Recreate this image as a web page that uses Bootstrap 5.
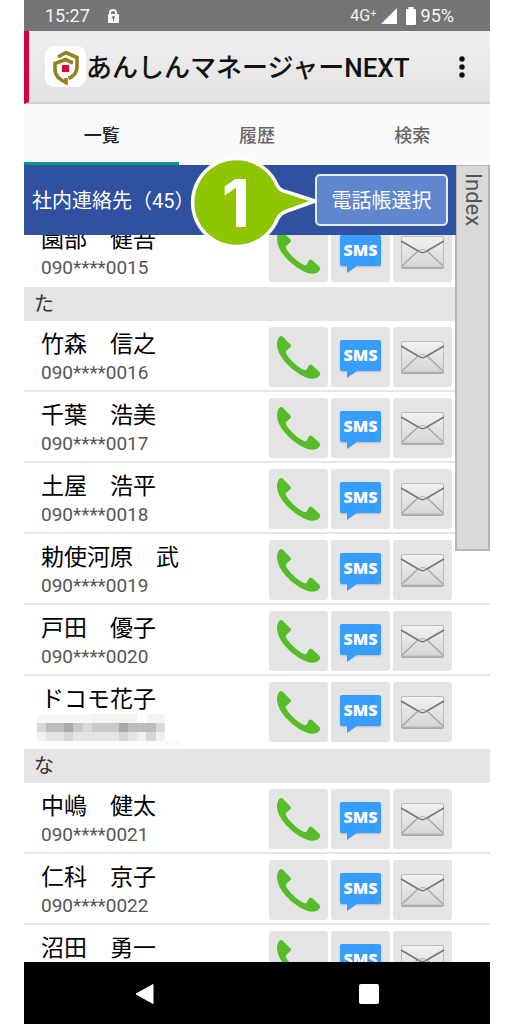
<!DOCTYPE html>
<html lang="ja">
<head>
<meta charset="utf-8">
<meta name="viewport" content="width=device-width, initial-scale=1">
<title>あんしんマネージャーNEXT</title>
<link href="https://cdn.jsdelivr.net/npm/bootstrap@5.3.0/dist/css/bootstrap.min.css" rel="stylesheet">
<style>
body{font-family:Roboto,"Noto Sans CJK JP",sans-serif;background:#fff;color:#111}
.phone{margin:0 24px}
.statusbar{background:#757575;color:#f4f4f4;height:31px;font-size:18px;line-height:31px;padding:0 36px 0 21px}
.net{font-size:16px}
.appbar{height:73px;background:linear-gradient(#f0f0f0,#e2e2e2);border-left:5px solid #d8003a;border-bottom:2px solid #d0d0d0;padding:0 16px}
.logo{width:41px;height:41px;background:#fff;border-radius:9px}
.title{font-size:26px;font-weight:500;line-height:36px;padding-top:3px}
.tabs{height:61px;background:#fafafa}
.tabs .nav-link{color:#666;font-size:18px;line-height:24px;font-weight:500;border-bottom:3px solid transparent;border-radius:0;padding:20px 0 14px}
.tabs .nav-link.active{color:#222;border-color:#009688}
.bookbar{height:70px;background:#3050a0;color:#fff;margin-right:34px;padding:0 8px;z-index:3}
.bookname{font-size:20px;line-height:28px;font-weight:400;margin:0;padding-top:2px}
.pick{width:133px;height:52px;background:#6086cf;border:2px solid #e4ecfa;border-radius:5px;color:#fff;font-size:20px;line-height:28px;padding:2px 0 0}
.pick:hover{background:#5078c4;color:#fff;border-color:#fff}
.callout{right:100%;top:50%;width:127px;height:92px;margin:-44px -2px 0 0;pointer-events:none}
.step{left:0;top:0;width:92px;text-align:center;font:700 66px/94px Inter,sans-serif;color:#fff}
.index-tab{top:0;right:0;width:35px;height:386px;background:#d9d9d9;border:2px solid #b6b6b6;border-top-width:1px;color:#555;writing-mode:vertical-rl;font-size:22px;line-height:28px;padding:7px 0 0;text-align:left;z-index:2}
.viewport-list{min-height:0}
.scrolled{margin-top:-19px}
.group{height:34px;background:#e5e5e5;color:#333;font-size:20px;line-height:35px;padding-left:10px;margin:0;font-weight:400}
.contact{height:71px;border-bottom:2px solid #e6e6e6;padding:5px 38px 0 17px}
.contact.last{height:73px;border-bottom:0}
.contact.first{border-bottom:0}
.who{font-size:23px;line-height:30px;font-weight:400;margin:0;padding-top:4px;color:#000}
.num{font-size:19px;line-height:26px;color:#555}
.acts{gap:3px}
.act{width:59px;height:60px;background:#e4e4e4;border:0;border-radius:3px;padding:0;margin-top:1px}
.act svg{display:block}
.bubble{display:block;width:41px;height:31px;margin:-4px auto 0;background:#379dff;border-radius:2px;color:#fff;font:800 16px/31px "Open Sans",sans-serif;position:relative;box-shadow:0 1px 2px #0003}
.bubble::after{content:"";position:absolute;left:7px;top:100%;border-top:7px solid #379dff;border-right:10px solid transparent}
.mosaic{display:block;margin:-2px 0 0 -4px}
.softkeys{height:62px;background:#000;padding:0 9px}
.softkeys button{background:none;border:0;padding:0;line-height:0}
</style>
</head>
<body>
<svg width="0" height="0" class="position-absolute" aria-hidden="true">
<defs>
<linearGradient id="paper" x1="0" y1="0" x2="0" y2="1"><stop offset="0" stop-color="#f1f1f1"/><stop offset="1" stop-color="#d6d6d6"/></linearGradient>
<symbol id="call" viewBox="0 0 59 60"><path d="M12 9Q14 9 15 11L21 17Q23 19 21 20.500L17 24Q16 25.500 18 28C22 34 29 40 34 42.500Q37 44 38 42L39.500 39Q41 36.500 43 38L50 44.500Q52.500 47 50 49C47 53 39 52 34 49C21 42 9 30 8 18C8 14 9 10 12 9Z" fill="#56bd28"/></symbol>
<symbol id="mail" viewBox="0 0 59 60"><rect x="8" y="15" width="43" height="32" rx="2" fill="#aaa"/><rect x="8.500" y="14.500" width="42" height="30.500" rx="1.500" fill="url(#paper)" stroke="#bbb"/><path d="M9 44L25 29M50 44L34 29" stroke="#a5a5a5" stroke-width="1.300"/><path d="M8 19L26 29.500Q29.500 32 33 29.500L51 19" fill="none" stroke="#777" stroke-width="1.500"/><path d="M25 29.500Q29.500 25.500 34 29.500" fill="none" stroke="#aaa"/></symbol>
</defs>
</svg>
<div class="phone d-flex flex-column vh-100 overflow-hidden">
<div class="statusbar d-flex align-items-center flex-shrink-0">
<span>15:27</span>
<svg class="ms-3" width="14" height="16" viewBox="0 0 14 16" aria-label="ロック"><path d="M4 8V5a3 3 0 0 1 6 0v3" fill="none" stroke="#f4f4f4" stroke-width="2"/><rect x="2" y="6" width="11" height="9" rx="1" fill="#f4f4f4"/><circle cx="7.500" cy="9.500" r="1.400" fill="#757575"/><path d="M7.500 10v3" stroke="#757575"/></svg>
<span class="net ms-auto me-1">4G⁺</span>
<svg width="16" height="16" viewBox="0 0 16 16" aria-hidden="true"><path d="M0 16L16 0V16Z" fill="#fff"/></svg>
<svg class="ms-2 me-1" width="12" height="18" viewBox="0 0 12 18" aria-hidden="true"><path d="M3.500 0h5v2H10a1 1 0 0 1 1 1v14a1 1 0 0 1-1 1H2a1 1 0 0 1-1-1V3a1 1 0 0 1 1-1h1.500Z" fill="#fff"/></svg>
<span>95%</span>
</div>
<header class="appbar d-flex align-items-center flex-shrink-0">
<svg class="logo" viewBox="0 0 41 41" aria-hidden="true"><g fill="none" stroke="#95801f" stroke-width="3.600"><path d="M13 11L21 6.500L32 11.500V21C32 26 29 30 23.500 32.500"/><path d="M28 17L20.500 13.500L10 17.500V24C10 30 14 33.500 21 36.500V32"/></g><rect x="17" y="19" width="7" height="7" fill="#e00032"/></svg>
<h1 class="title mb-0 text-nowrap">あんしんマネージャーNEXT</h1>
<button class="btn p-0 border-0 ms-auto lh-1" aria-label="メニュー"><svg width="24" height="24" viewBox="0 0 24 24"><g fill="#111"><circle cx="12" cy="4" r="2.700"/><circle cx="12" cy="12" r="2.700"/><circle cx="12" cy="20" r="2.700"/></g></svg></button>
</header>
<nav class="tabs nav nav-justified flex-shrink-0">
<a class="nav-link nav-item active" aria-current="page" href="#list">一覧</a>
<a class="nav-link nav-item" href="#history">履歴</a>
<a class="nav-link nav-item" href="#search">検索</a>
</nav>
<main id="list" class="position-relative flex-grow-1 d-flex flex-column viewport-list">
<div class="bookbar d-flex align-items-center justify-content-between position-relative flex-shrink-0">
<h2 class="bookname text-nowrap">社内連絡先（45）</h2>
<div class="position-relative">
<button class="btn pick">電話帳選択</button>
<div class="callout position-absolute"><svg width="127" height="92" viewBox="0 0 127 92"><path d="M87 29A44 44 0 1 0 87 64Q90 57 97 55L125 45L97 36Q90 35 87 29Z" fill="#8fc400" stroke="#fff" stroke-width="3.500" stroke-linejoin="round"/></svg><span class="step position-absolute">1</span></div>
</div>
</div>
<button class="index-tab position-absolute">Index</button>
<div class="flex-grow-1 overflow-hidden viewport-list">
<div class="scrolled">
<div class="contact first d-flex justify-content-between"><div><h3 class="who">園部　健吾</h3><div class="num">090****0015</div></div><div class="d-flex acts"><button class="act" aria-label="電話"><svg width="59" height="60"><use href="#call"/></svg></button><button class="act"><span class="bubble">SMS</span></button><button class="act" aria-label="メール"><svg width="59" height="60"><use href="#mail"/></svg></button></div></div>
<h3 class="group">た</h3>
<div class="contact d-flex justify-content-between"><div><h3 class="who">竹森　信之</h3><div class="num">090****0016</div></div><div class="d-flex acts"><button class="act" aria-label="電話"><svg width="59" height="60"><use href="#call"/></svg></button><button class="act"><span class="bubble">SMS</span></button><button class="act" aria-label="メール"><svg width="59" height="60"><use href="#mail"/></svg></button></div></div>
<div class="contact d-flex justify-content-between"><div><h3 class="who">千葉　浩美</h3><div class="num">090****0017</div></div><div class="d-flex acts"><button class="act" aria-label="電話"><svg width="59" height="60"><use href="#call"/></svg></button><button class="act"><span class="bubble">SMS</span></button><button class="act" aria-label="メール"><svg width="59" height="60"><use href="#mail"/></svg></button></div></div>
<div class="contact d-flex justify-content-between"><div><h3 class="who">土屋　浩平</h3><div class="num">090****0018</div></div><div class="d-flex acts"><button class="act" aria-label="電話"><svg width="59" height="60"><use href="#call"/></svg></button><button class="act"><span class="bubble">SMS</span></button><button class="act" aria-label="メール"><svg width="59" height="60"><use href="#mail"/></svg></button></div></div>
<div class="contact d-flex justify-content-between"><div><h3 class="who">勅使河原　武</h3><div class="num">090****0019</div></div><div class="d-flex acts"><button class="act" aria-label="電話"><svg width="59" height="60"><use href="#call"/></svg></button><button class="act"><span class="bubble">SMS</span></button><button class="act" aria-label="メール"><svg width="59" height="60"><use href="#mail"/></svg></button></div></div>
<div class="contact d-flex justify-content-between"><div><h3 class="who">戸田　優子</h3><div class="num">090****0020</div></div><div class="d-flex acts"><button class="act" aria-label="電話"><svg width="59" height="60"><use href="#call"/></svg></button><button class="act"><span class="bubble">SMS</span></button><button class="act" aria-label="メール"><svg width="59" height="60"><use href="#mail"/></svg></button></div></div>
<div class="contact last d-flex justify-content-between"><div><h3 class="who">ドコモ花子</h3>
<svg class="mosaic" width="143" height="34" viewBox="0 0 143 34" aria-label="非表示の番号"><g stroke-width="9"><path d="M0 5.500H55" stroke="#f7f7f7"/><path d="M55 5.500H100M110 5.500H128" stroke="#f3f3f3"/><path d="M0 14.500H128" stroke="#c9c9c9"/><path d="M0 14.500H9M46 14.500H55M119 14.500H128" stroke="#d8d8d8"/><path d="M9 14.500H27M91 14.500H119" stroke="#bcbcbc"/><path d="M27 14.500H36M82 14.500H91" stroke="#a8a8a8"/><path d="M0 23.500H128" stroke="#e4e4e4"/><path d="M0 23.500H9M100 23.500H109M119 23.500H128" stroke="#f0f0f0"/><path d="M27 23.500H36M82 23.500H91M109 23.500H119" stroke="#d6d6d6"/></g><path d="M0 30H143" stroke="#fafafa" stroke-width="4"/></svg></div><div class="d-flex acts"><button class="act" aria-label="電話"><svg width="59" height="60"><use href="#call"/></svg></button><button class="act"><span class="bubble">SMS</span></button><button class="act" aria-label="メール"><svg width="59" height="60"><use href="#mail"/></svg></button></div></div>
<h3 class="group">な</h3>
<div class="contact d-flex justify-content-between"><div><h3 class="who">中嶋　健太</h3><div class="num">090****0021</div></div><div class="d-flex acts"><button class="act" aria-label="電話"><svg width="59" height="60"><use href="#call"/></svg></button><button class="act"><span class="bubble">SMS</span></button><button class="act" aria-label="メール"><svg width="59" height="60"><use href="#mail"/></svg></button></div></div>
<div class="contact d-flex justify-content-between"><div><h3 class="who">仁科　京子</h3><div class="num">090****0022</div></div><div class="d-flex acts"><button class="act" aria-label="電話"><svg width="59" height="60"><use href="#call"/></svg></button><button class="act"><span class="bubble">SMS</span></button><button class="act" aria-label="メール"><svg width="59" height="60"><use href="#mail"/></svg></button></div></div>
<div class="contact d-flex justify-content-between"><div><h3 class="who">沼田　勇一</h3></div><div class="d-flex acts"><button class="act" aria-label="電話"><svg width="59" height="60"><use href="#call"/></svg></button><button class="act"><span class="bubble">SMS</span></button><button class="act" aria-label="メール"><svg width="59" height="60"><use href="#mail"/></svg></button></div></div>
</div>
</div>
</main>
<footer class="softkeys d-flex align-items-center flex-shrink-0 text-center">
<div class="col"><button aria-label="戻る"><svg width="20" height="22" viewBox="0 0 20 22"><path d="M18 1.500V20.500L1 11Z" fill="#fff" stroke="#fff" stroke-linejoin="round"/></svg></button></div>
<div class="col"><button aria-label="ホーム"><svg width="20" height="20" viewBox="0 0 20 20"><rect width="20" height="20" rx="2" fill="#fff"/></svg></button></div>
</footer>
</div>
<script src="https://cdn.jsdelivr.net/npm/bootstrap@5.3.0/dist/js/bootstrap.bundle.min.js"></script>
</body>
</html>
